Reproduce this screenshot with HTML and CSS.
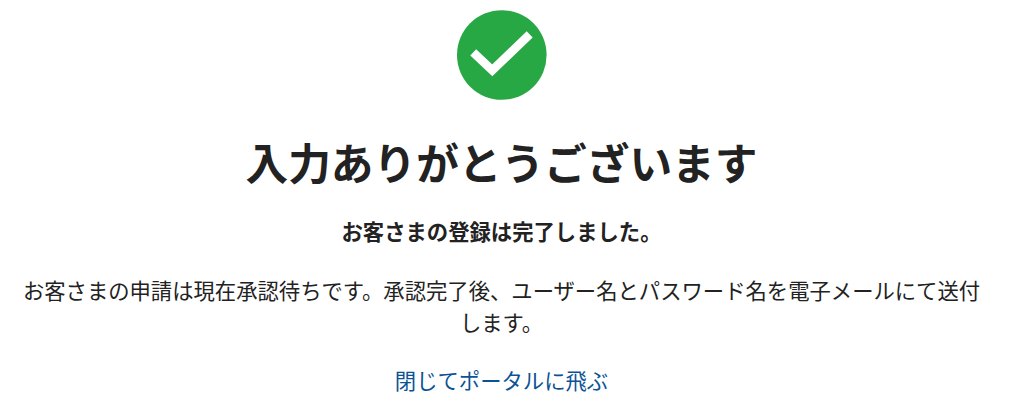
FILE: index.html
```html
<!DOCTYPE html>
<html lang="ja">
<head>
  <meta charset="UTF-8" />
  <title>入力ありがとうございます</title>
  <link rel="stylesheet" href="styles.css">
</head>
<body>
  <div class="container">
    <div class="check-icon">
      <svg viewBox="0 0 90 90" width="90" height="90">
        <circle cx="44.8" cy="45" r="44.8" fill="#28a745" />
        <path d="M16.2 42.3 L35.3 60.3 L72.7 24.3" fill="none" stroke="#fff" stroke-width="8.6" />
      </svg>
    </div>
    <h1>入力ありがとうございます</h1>
    <p class="lead">お客さまの登録は完了しました。</p>
    <p class="message">お客さまの申請は現在承認待ちです。承認完了後、ユーザー名とパスワード名を電子メールにて送付します。</p>
    <a class="portal-link" href="#">閉じてポータルに飛ぶ</a>
  </div>
</body>
</html>
```

FILE: styles.css
```css
body {
  margin: 0;
  background-color: #fff;
  font-family: "Noto Sans CJK JP", "Liberation Sans", sans-serif;
  color: #222;
}
.container {
  display: flex;
  flex-direction: column;
  align-items: center;
  padding: 10px 12px 0 0;
  text-align: center;
}
.check-icon {
  height: 90px;
}
.check-icon svg {
  display: block;
}
h1 {
  margin: 30px 0 0;
  font-size: 42.67px;
  line-height: 64px;
  font-weight: 700;
}
.lead {
  margin: 21px 0 0;
  font-size: 21.33px;
  line-height: 32px;
  font-weight: 700;
}
.message {
  margin: 27px 0 0;
  width: 970px;
  font-size: 21.33px;
  line-height: 32px;
}
.portal-link {
  margin-top: 26px;
  font-size: 21.33px;
  line-height: 32px;
  color: #0b5394;
  text-decoration: none;
}
```
